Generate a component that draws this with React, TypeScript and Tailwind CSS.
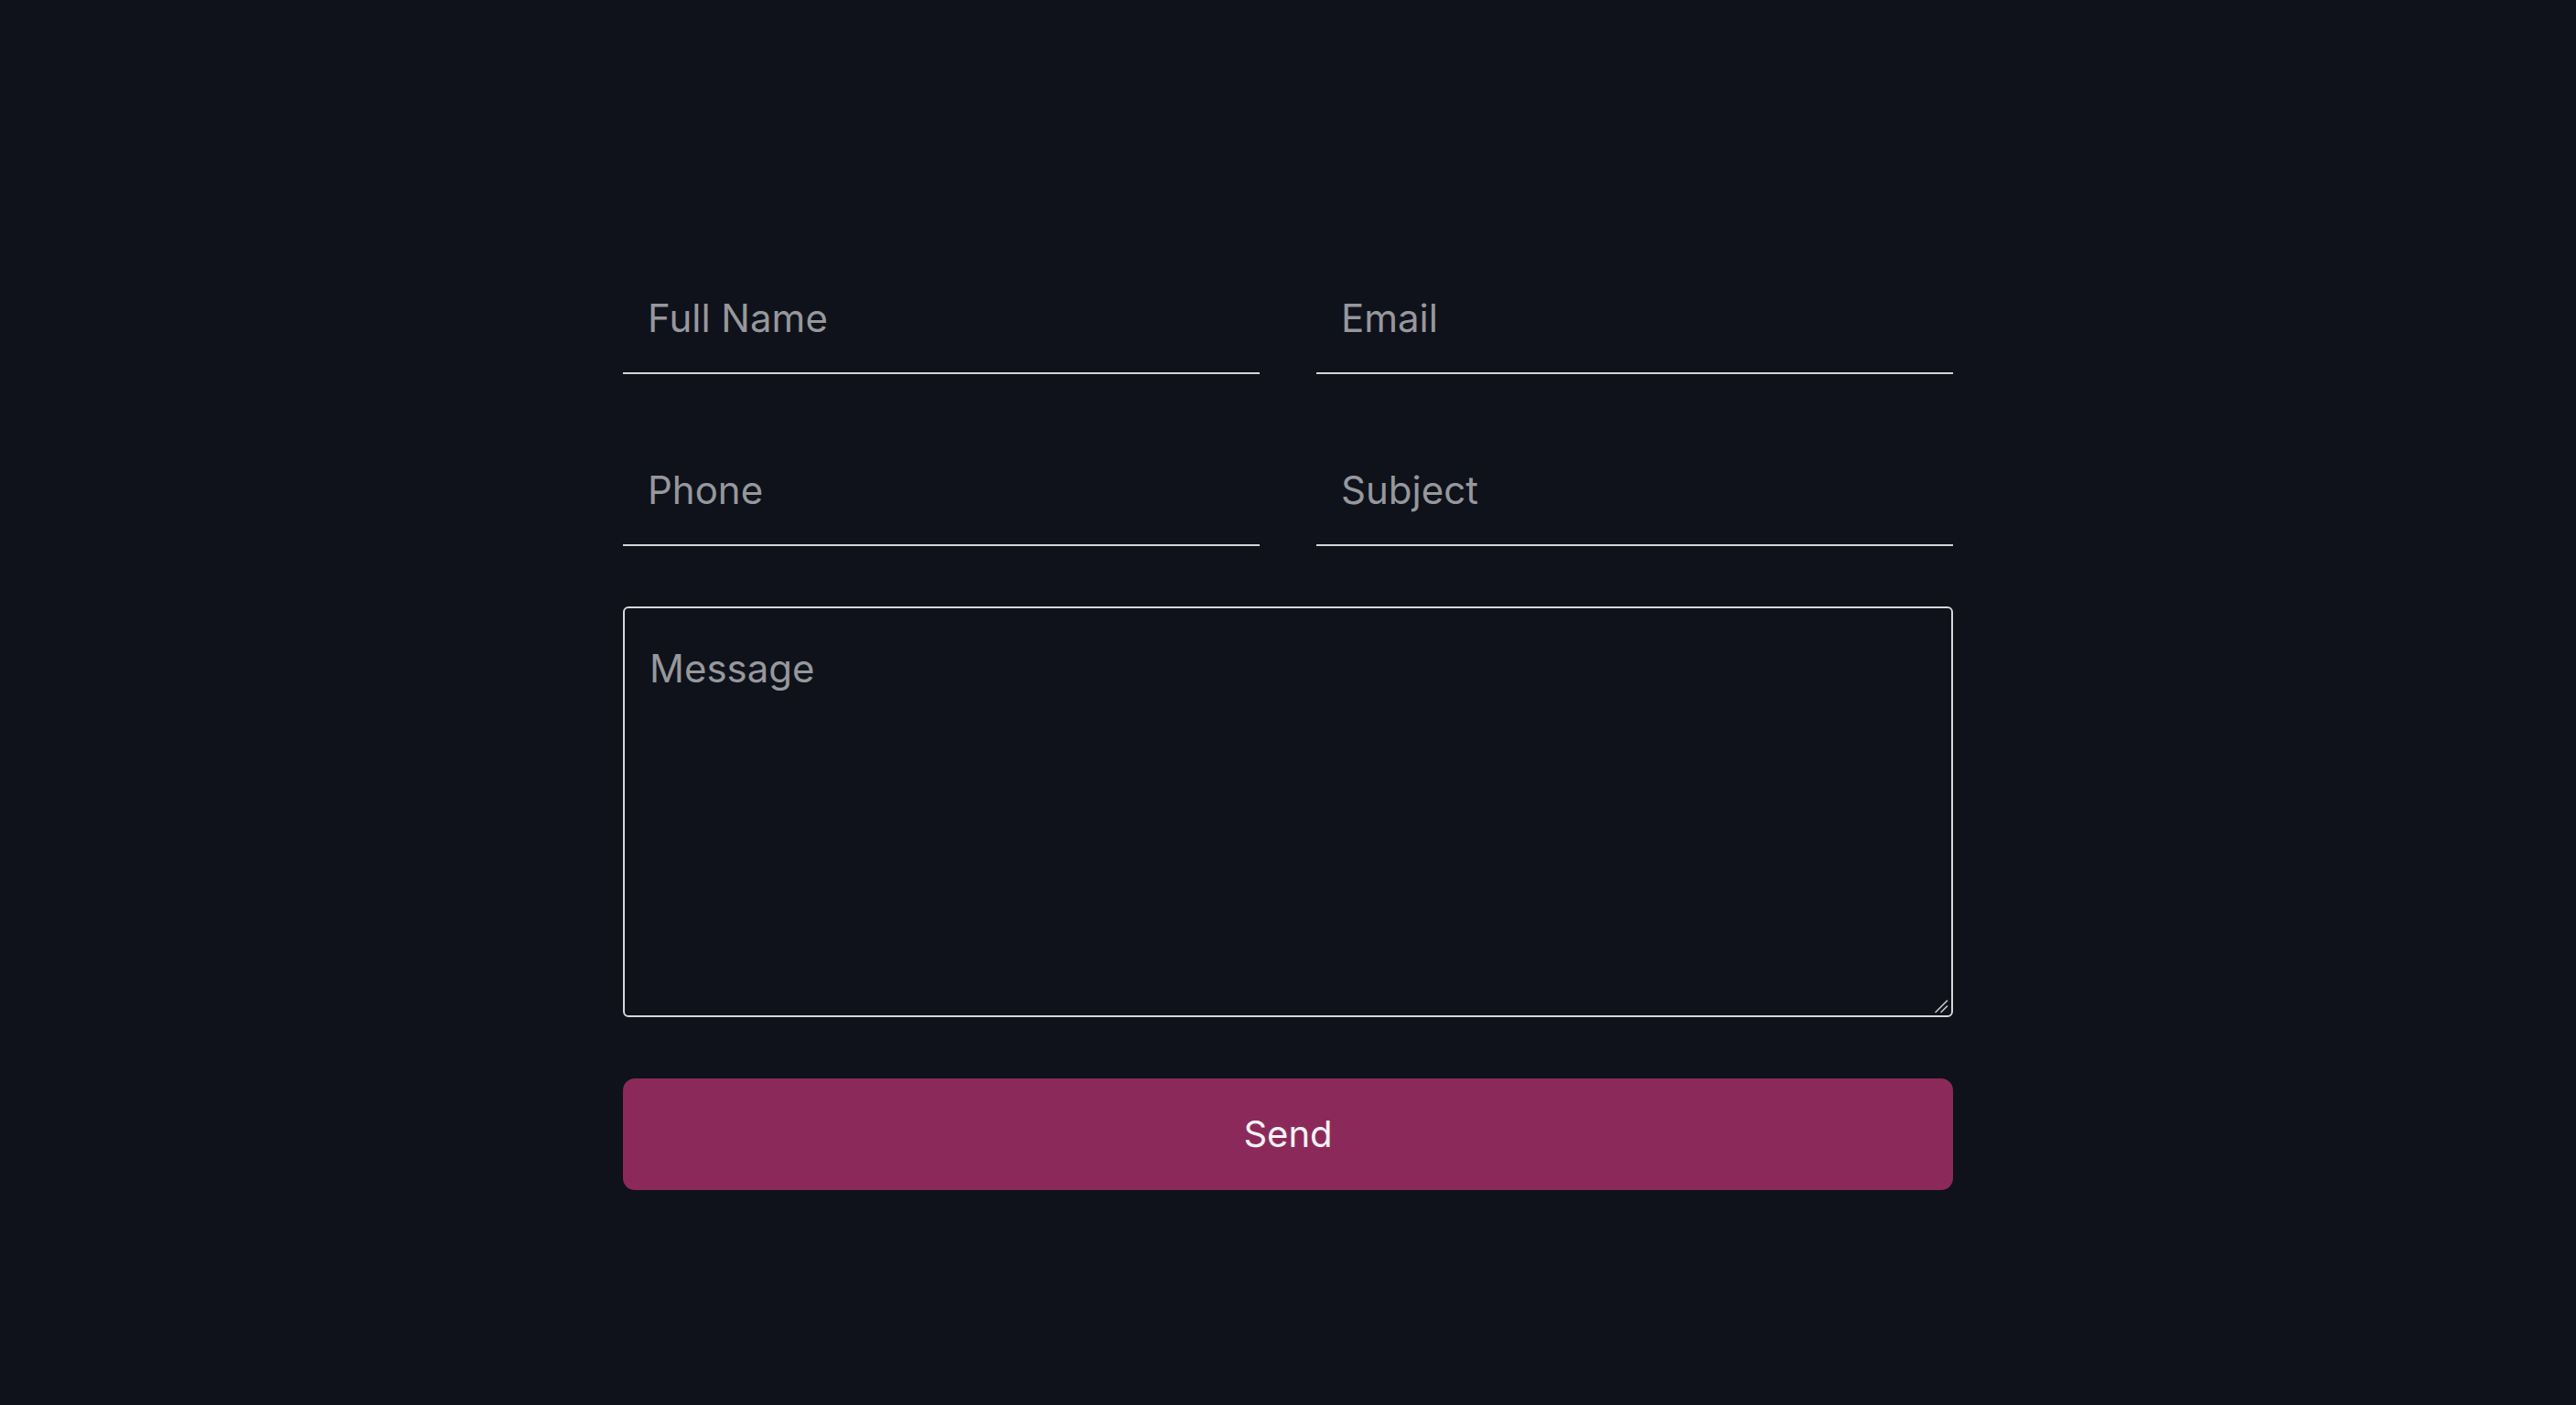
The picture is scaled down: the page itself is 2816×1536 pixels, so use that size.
import React from "react";

export default function App() {
  const inputCls =
    "w-full h-[126px] pt-[4px] pl-[27px] pr-[27px] bg-transparent border-0 border-b-2 border-[#d6d6d8] outline-none text-[42px] text-[#e5e5e5] placeholder:text-[#96989c]";
  return (
    <div
      className="h-screen w-full overflow-hidden bg-[#0f121b] flex justify-center pt-[283px]"
      style={{ fontFamily: 'Inter, "Noto Sans", sans-serif' }}
    >
      <form className="w-[1454px] flex flex-col gap-[64px]" onSubmit={(e) => e.preventDefault()}>
        <div className="grid grid-cols-2 gap-x-[62px] gap-y-[62px]">
          <input className={inputCls} placeholder="Full Name" />
          <input className={inputCls} placeholder="Email" />
          <input className={inputCls} placeholder="Phone" />
          <input className={inputCls} placeholder="Subject" />
        </div>
        <div className="relative mt-[2px]">
          <textarea
            className="block w-full h-[449px] resize-none rounded-[6px] border-2 border-[#d6d6d8] bg-transparent pt-[34px] px-[27px] text-[42px] text-[#e5e5e5] placeholder:text-[#96989c] outline-none"
            placeholder="Message"
          />
          <svg
            className="absolute right-[5px] bottom-[4px] pointer-events-none"
            width="16"
            height="16"
            viewBox="0 0 16 16"
          >
            <line x1="2" y1="14.5" x2="14.5" y2="2" stroke="#c9c9cc" strokeWidth="1.6" strokeLinecap="round" />
            <line x1="8" y1="14.5" x2="14.5" y2="8" stroke="#c9c9cc" strokeWidth="1.6" strokeLinecap="round" />
          </svg>
        </div>
        <button
          type="submit"
          className="mt-[3px] w-full h-[122px] rounded-[13px] bg-[#8b2a5a] text-[40px] text-[#f7f2f5] font-normal"
        >
          Send
        </button>
      </form>
    </div>
  );
}
